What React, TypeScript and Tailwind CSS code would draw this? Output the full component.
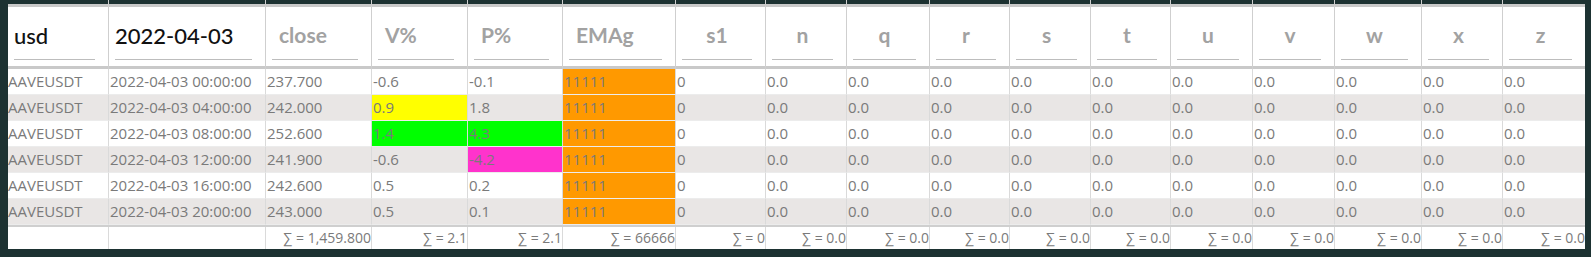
import React from "react";

const GRID =
  "grid grid-cols-[101px_157px_106px_96px_95px_113px_90px_81px_83px_80px_81px_80px_82px_82px_87px_81px_82px]";

type Col = { head: string; filled?: boolean; align: "left" | "indent" | "center"; sum: string };

const cols: Col[] = [
  { head: "usd", filled: true, align: "left", sum: "" },
  { head: "2022-04-03", filled: true, align: "left", sum: "" },
  { head: "close", align: "indent", sum: "∑ = 1,459.800" },
  { head: "V%", align: "indent", sum: "∑ = 2.1" },
  { head: "P%", align: "indent", sum: "∑ = 2.1" },
  { head: "EMAg", align: "indent", sum: "∑ = 66666" },
  { head: "s1", align: "center", sum: "∑ = 0" },
  { head: "n", align: "center", sum: "∑ = 0.0" },
  { head: "q", align: "center", sum: "∑ = 0.0" },
  { head: "r", align: "center", sum: "∑ = 0.0" },
  { head: "s", align: "center", sum: "∑ = 0.0" },
  { head: "t", align: "center", sum: "∑ = 0.0" },
  { head: "u", align: "center", sum: "∑ = 0.0" },
  { head: "v", align: "center", sum: "∑ = 0.0" },
  { head: "w", align: "center", sum: "∑ = 0.0" },
  { head: "x", align: "center", sum: "∑ = 0.0" },
  { head: "z", align: "center", sum: "∑ = 0.0" },
];

const rows = [
  { time: "00:00:00", close: "237.700", v: "-0.6", p: "-0.1" },
  { time: "04:00:00", close: "242.000", v: "0.9", p: "1.8", vBg: "bg-[#ffff00]" },
  { time: "08:00:00", close: "252.600", v: "1.4", p: "4.3", vBg: "bg-[#00ff00]", pBg: "bg-[#00ff00]" },
  { time: "12:00:00", close: "241.900", v: "-0.6", p: "-4.2", pBg: "bg-[#ff33cc]" },
  { time: "16:00:00", close: "242.600", v: "0.5", p: "0.2" },
  { time: "20:00:00", close: "243.000", v: "0.5", p: "0.1" },
];

const headFont = { fontFamily: "Lato, 'Open Sans', sans-serif" };
const bodyFont = { fontFamily: "'Open Sans', Lato, sans-serif" };

function HeaderCell({ col, last }: { col: Col; last: boolean }) {
  const align =
    col.align === "center" ? "justify-center" : col.align === "indent" ? "justify-start pl-[7px]" : "justify-start";
  return (
    <div className={`flex flex-col ${last ? "" : "border-r border-[#cfcfcf]"}`} style={headFont}>
      <div className="h-[4px]" />
      <div className="h-[3px] bg-[#c9c9c9]" />
      <div className="h-[59px] bg-white pt-[9px]">
        <div className={`ml-[6px] mr-[13px] h-[44px] pb-[5px] border-b border-[#bdbdbd] flex items-center ${align}`}>
          <span
            className={
              col.filled
                ? "text-[22px] font-medium text-[#111]"
                : "text-[21px] font-bold text-[#a2a2a2]"
            }
          >
            {col.head}
          </span>
        </div>
      </div>
      <div className="h-[3px] bg-[#c9c9c9]" />
    </div>
  );
}

export default function App() {
  return (
    <div className="w-[1591px] h-[257px] bg-[#1d3232] pl-[8px] pr-[6px] pb-[6px] overflow-hidden">
      <div className={GRID}>
        {cols.map((c, i) => (
          <HeaderCell key={c.head} col={c} last={i === cols.length - 1} />
        ))}
      </div>

      {rows.map((r, ri) => {
        const base = ri % 2 === 1 ? "bg-[#e9e6e5]" : "bg-white";
        const cells = [
          { t: "AAVEUSDT", bg: base, pad: "pl-0" },
          { t: `2022-04-03 ${r.time}`, bg: base },
          { t: r.close, bg: base },
          { t: r.v, bg: r.vBg ?? base },
          { t: r.p, bg: r.pBg ?? base },
          { t: "11111", bg: "bg-[#ff9900]" },
          { t: "0", bg: base },
          ...Array.from({ length: 10 }, () => ({ t: "0.0", bg: base })),
        ];
        return (
          <div key={ri} className={`${GRID} h-[26px]`} style={bodyFont}>
            {cells.map((c, ci) => (
              <div
                key={ci}
                className={`${c.bg} ${"pad" in c ? c.pad : "pl-[1px]"} border-b border-[#ececec] ${
                  ci === cells.length - 1 ? "" : "border-r border-r-[#dadada]"
                } text-[15px] leading-[25px] text-[#7a7a7a] whitespace-nowrap overflow-hidden`}
              >
                {c.t}
              </div>
            ))}
          </div>
        );
      })}

      <div className={`${GRID} h-[24px] bg-white border-t-2 border-[#cfcfcf]`} style={bodyFont}>
        {cols.map((c, i) => (
          <div
            key={c.head}
            className={`${i === cols.length - 1 ? "" : "border-r border-[#dadada]"} text-right text-[14px] leading-[22px] text-[#7a7a7a] whitespace-nowrap overflow-hidden`}
          >
            {c.sum}
          </div>
        ))}
      </div>
    </div>
  );
}
